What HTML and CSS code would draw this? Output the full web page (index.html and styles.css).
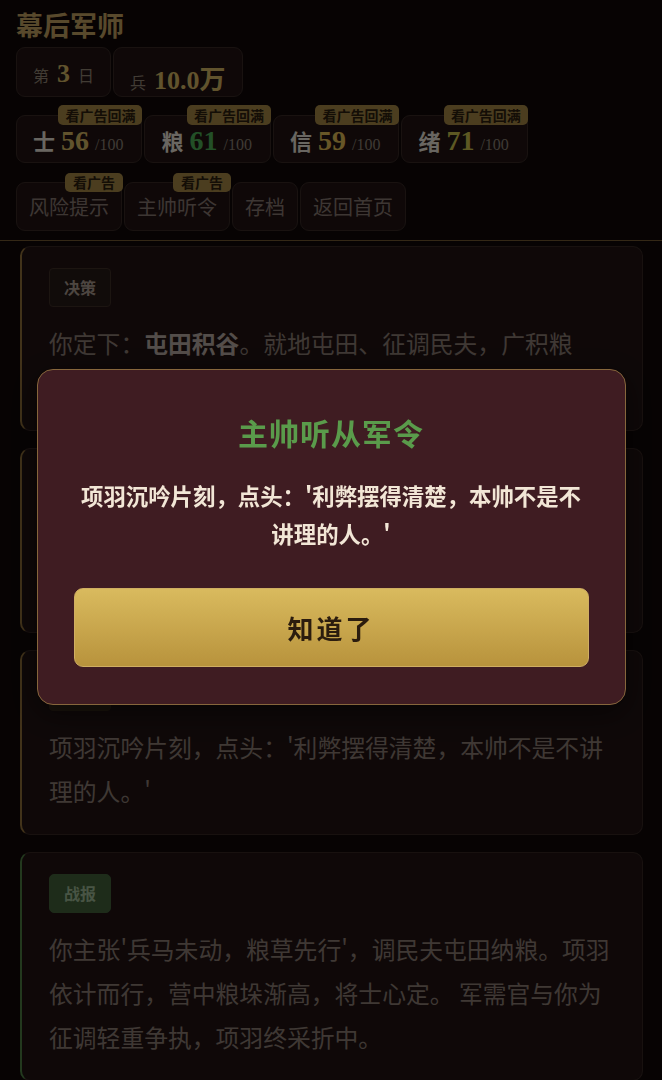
FILE: index.html
```html
<!DOCTYPE html>
<html lang="zh-CN">
<head>
<meta charset="utf-8">
<title>幕后军师</title>
<link rel="stylesheet" href="styles.css">
</head>
<body>
<header class="top">
  <h1 class="brand">幕后军师</h1>
  <div class="row row-info">
    <div class="pill"><span class="lbl">第</span><span class="num">3</span><span class="lbl">日</span></div>
    <div class="pill"><span class="lbl">兵</span><span class="num">10.0万</span></div>
  </div>
  <div class="row row-stats">
    <div class="stat"><span class="stat-name">士</span><span class="stat-val c-gold">56</span><span class="stat-max">/100</span><span class="badge">看广告回满</span></div>
    <div class="stat"><span class="stat-name">粮</span><span class="stat-val c-green">61</span><span class="stat-max">/100</span><span class="badge">看广告回满</span></div>
    <div class="stat"><span class="stat-name">信</span><span class="stat-val c-amber">59</span><span class="stat-max">/100</span><span class="badge">看广告回满</span></div>
    <div class="stat"><span class="stat-name">绪</span><span class="stat-val c-olive">71</span><span class="stat-max">/100</span><span class="badge">看广告回满</span></div>
  </div>
  <div class="row row-actions">
    <button class="act">风险提示<span class="badge badge-sm">看广告</span></button>
    <button class="act">主帅听令<span class="badge badge-sm">看广告</span></button>
    <button class="act">存档</button>
    <button class="act">返回首页</button>
  </div>
</header>

<main class="feed">
  <article class="card">
    <span class="tag">决策</span>
    <p class="text">你定下：<b>屯田积谷</b>。就地屯田、征调民夫，广积粮草，以备久战之需。</p>
  </article>
  <article class="card">
    <span class="tag">军议</span>
    <p class="text">你入帐进言，陈说屯田之利与征调之弊，请主帅权衡轻重，再定行止。</p>
  </article>
  <article class="card">
    <span class="tag tag-event">主帅</span>
    <p class="text">项羽沉吟片刻，点头：'利弊摆得清楚，本帅不是不讲理的人。'</p>
  </article>
  <article class="card card-green">
    <span class="tag tag-green">战报</span>
    <p class="text">你主张'兵马未动，粮草先行'，调民夫屯田纳粮。项羽依计而行，营中粮垛渐高，将士心定。 军需官与你为征调轻重争执，项羽终采折中。</p>
  </article>
</main>

<div class="overlay">
  <div class="modal">
    <h2 class="modal-title">主帅听从军令</h2>
    <p class="modal-text">项羽沉吟片刻，点头：'利弊摆得清楚，本帅不是不讲理的人。'</p>
    <button class="modal-btn">知道了</button>
  </div>
</div>
</body>
</html>
```

FILE: styles.css
```css
* { box-sizing: border-box; }

html, body {
  margin: 0;
  padding: 0;
  background: #100808;
}

body {
  font-family: "Noto Sans CJK SC", sans-serif;
  color: #908078;
}

.top {
  padding: 8px 16px 9px;
  border-bottom: 1px solid #785c34;
}

.brand {
  margin: 0;
  font-size: 27px;
  line-height: 34px;
  font-weight: 700;
  color: #c8a664;
}

.row {
  display: flex;
  gap: 2px;
}

.row-info { margin-top: 5px; }
.row-stats { margin-top: 18px; }
.row-actions { margin-top: 19px; }

.pill {
  height: 50px;
  display: flex;
  align-items: baseline;
  justify-content: center;
  gap: 8px;
  padding: 11px 16px 0;
  background: #221414;
  border: 1px solid #3a2a26;
  border-radius: 9px;
}

.lbl {
  font-size: 16px;
  color: #968878;
}

.num {
  font-family: "Liberation Serif", "Noto Sans CJK SC", serif;
  font-size: 26px;
  font-weight: 700;
  color: #dcbe68;
}

.stat {
  position: relative;
  height: 48px;
  display: flex;
  align-items: baseline;
  gap: 6px;
  padding: 8px 18px 0 16px;
  background: #221414;
  border: 1px solid #3a2a26;
  border-radius: 9px;
}

.stat-name {
  font-size: 22px;
  font-weight: 700;
  color: #f0e8dc;
}

.stat-val {
  font-family: "Liberation Serif", "Noto Sans CJK SC", serif;
  font-size: 28px;
  font-weight: 700;
}

.c-gold { color: #dcbe68; }
.c-green { color: #50b45a; }
.c-amber { color: #eac45a; }
.c-olive { color: #d4c850; }

.stat-max {
  font-family: "Liberation Serif", serif;
  font-size: 16px;
  color: #908478;
}

.badge {
  position: absolute;
  top: -11px;
  right: -1px;
  height: 20px;
  padding: 0 7px;
  font-size: 14px;
  line-height: 20px;
  font-weight: 700;
  color: #2e200e;
  background: #aa8c48;
  border-radius: 5px;
  white-space: nowrap;
}

.act {
  position: relative;
  height: 49px;
  padding: 0 12px;
  font-family: "Noto Sans CJK SC", sans-serif;
  font-size: 20px;
  color: #8c7c74;
  background: #221414;
  border: 1px solid #3a2a26;
  border-radius: 9px;
}

.badge-sm {
  top: -10px;
  right: -2px;
  height: 19px;
  line-height: 19px;
  padding: 0 8px;
}

.feed {
  display: flex;
  flex-direction: column;
  gap: 17px;
  padding: 5px 19px 20px 20px;
}

.card {
  background: #221414;
  border: 1px solid #382824;
  border-left: 2px solid #96743c;
  border-radius: 10px;
  padding: 21px 27px;
}

.card-green { border-left-color: #508246; }

.tag {
  display: block;
  width: fit-content;
  height: 39px;
  padding: 0 14px;
  font-size: 16px;
  line-height: 37px;
  font-weight: 700;
  color: #b0a094;
  background: #281c18;
  border: 1px solid #403028;
  border-radius: 4px;
}

.tag-event {
  background: #3a2c1c;
  border-color: #3a2c1c;
}

.tag-green {
  color: #a4c09c;
  background: #44643c;
  border-color: #44643c;
  border-radius: 5px;
}

.text {
  margin: 14px 0 0;
  font-size: 23.8px;
  line-height: 44px;
  color: #908078;
}

.text b {
  color: #beb0a8;
  font-weight: 700;
}

.overlay {
  position: fixed;
  inset: 0;
  background: rgba(0, 0, 0, 0.56);
  display: flex;
  align-items: center;
  justify-content: center;
  padding-bottom: 6px;
}

.modal {
  width: 589px;
  padding: 42px 36px 37px;
  background: #3f1c22;
  border: 1px solid #86663c;
  border-radius: 16px;
  text-align: center;
  box-shadow: 0 8px 30px rgba(0, 0, 0, 0.5);
}

.modal-title {
  margin: 0;
  font-size: 30px;
  line-height: 40px;
  font-weight: 700;
  color: #5a9b4b;
  letter-spacing: 1px;
}

.modal-text {
  margin: 24px 0 0;
  padding: 0 4px;
  font-size: 22.4px;
  line-height: 38px;
  font-weight: 700;
  color: #f2e6d6;
}

.modal-btn {
  display: block;
  width: 100%;
  height: 79px;
  margin-top: 36px;
  font-family: "Noto Sans CJK SC", sans-serif;
  font-size: 26px;
  font-weight: 700;
  letter-spacing: 3px;
  color: #2b1c0e;
  background: linear-gradient(180deg, #d9ba5e 0%, #b8933c 100%);
  border: 1px solid #cfae62;
  border-radius: 9px;
}
```
